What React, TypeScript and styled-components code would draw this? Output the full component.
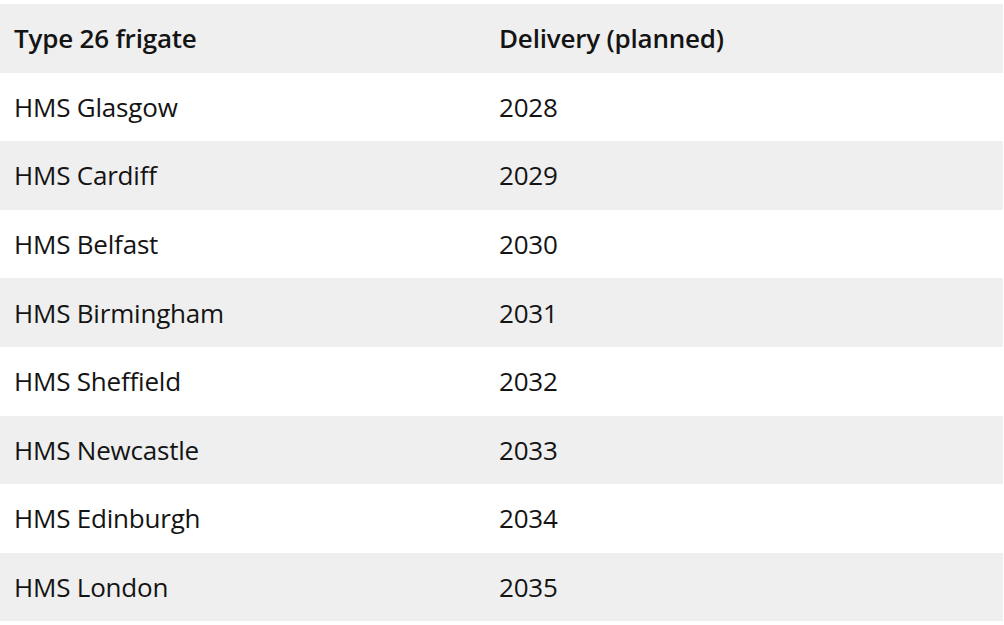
import styled, { createGlobalStyle } from 'styled-components';

const rows: [string, string][] = [
  ['HMS Glasgow', '2028'],
  ['HMS Cardiff', '2029'],
  ['HMS Belfast', '2030'],
  ['HMS Birmingham', '2031'],
  ['HMS Sheffield', '2032'],
  ['HMS Newcastle', '2033'],
  ['HMS Edinburgh', '2034'],
  ['HMS London', '2035'],
];

export default function App() {
  return (
    <>
      <GlobalStyle />
      <StyledTable>
        <StyledRow $shaded>
          <StyledHeadCell>Type 26 frigate</StyledHeadCell>
          <StyledHeadCell>Delivery (planned)</StyledHeadCell>
        </StyledRow>
        {rows.map(([name, year], i) => (
          <StyledRow key={name} $shaded={i % 2 === 1}>
            <StyledCell>{name}</StyledCell>
            <StyledCell>{year}</StyledCell>
          </StyledRow>
        ))}
      </StyledTable>
    </>
  );
}

const GlobalStyle = createGlobalStyle`
  body {
    margin: 0;
    background: #ffffff;
    font-family: 'Open Sans', 'Noto Sans', sans-serif;
  }
`;

const StyledTable = styled.div`
  width: 1003px;
  margin-top: 4px;
  display: flex;
  flex-direction: column;
`;

const StyledRow = styled.div<{ $shaded?: boolean }>`
  display: grid;
  grid-template-columns: 485px 1fr;
  align-items: center;
  height: 68.6px;
  padding-left: 14px;
  background: ${(p) => (p.$shaded ? '#efefef' : '#ffffff')};
`;

const StyledCell = styled.div`
  font-size: 26px;
  color: #141414;
  letter-spacing: -0.2px;
  line-height: 1;
`;

const StyledHeadCell = styled(StyledCell)`
  font-weight: 600;
`;
